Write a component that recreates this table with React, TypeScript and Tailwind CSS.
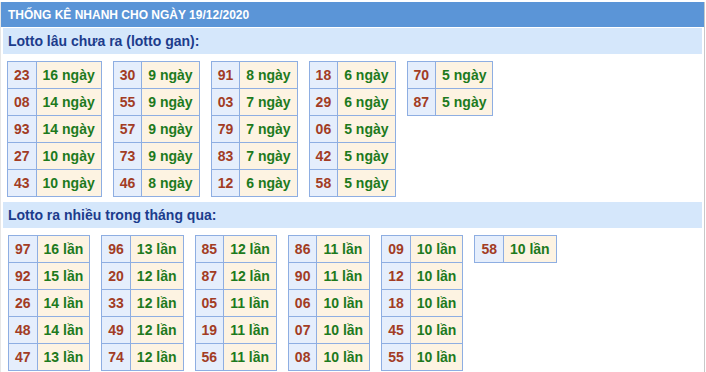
import React from "react";

type Row = [string, string];

const ganTables: Row[][] = [
  [["23", "16 ngày"], ["08", "14 ngày"], ["93", "14 ngày"], ["27", "10 ngày"], ["43", "10 ngày"]],
  [["30", "9 ngày"], ["55", "9 ngày"], ["57", "9 ngày"], ["73", "9 ngày"], ["46", "8 ngày"]],
  [["91", "8 ngày"], ["03", "7 ngày"], ["79", "7 ngày"], ["83", "7 ngày"], ["12", "6 ngày"]],
  [["18", "6 ngày"], ["29", "6 ngày"], ["06", "5 ngày"], ["42", "5 ngày"], ["58", "5 ngày"]],
  [["70", "5 ngày"], ["87", "5 ngày"]],
];

const nhieuTables: Row[][] = [
  [["97", "16 lần"], ["92", "15 lần"], ["26", "14 lần"], ["48", "14 lần"], ["47", "13 lần"]],
  [["96", "13 lần"], ["20", "12 lần"], ["33", "12 lần"], ["49", "12 lần"], ["74", "12 lần"]],
  [["85", "12 lần"], ["87", "12 lần"], ["05", "11 lần"], ["19", "11 lần"], ["56", "11 lần"]],
  [["86", "11 lần"], ["90", "11 lần"], ["06", "10 lần"], ["07", "10 lần"], ["08", "10 lần"]],
  [["09", "10 lần"], ["12", "10 lần"], ["18", "10 lần"], ["45", "10 lần"], ["55", "10 lần"]],
  [["58", "10 lần"]],
];

const LottoTable = ({ rows }: { rows: Row[] }) => (
  <table className="border-collapse self-start text-[14px] font-bold">
    <tbody>
      {rows.map(([num, val]) => (
        <tr key={num} className="h-[27px]">
          <td className="border border-[#8eaee2] bg-[#e5eefc] px-[6px] py-0 text-[#a23c24]">{num}</td>
          <td className="border border-[#8eaee2] bg-[#fdf3e2] px-[6px] py-0 text-[#1d7a1d] whitespace-nowrap">{val}</td>
        </tr>
      ))}
    </tbody>
  </table>
);

const SubHeader = ({ title }: { title: string }) => (
  <div className="flex h-[26px] items-center bg-[#d5e7fb] pl-[5px] text-[14px] font-bold text-[#1c3c8c]">
    {title}
  </div>
);

export default function App() {
  return (
    <div
      className="w-[705px] bg-white pt-[2px]"
      style={{ fontFamily: '"Liberation Sans", Arial, sans-serif' }}
    >
      <div className="border-r border-[#c8c8c8] border-l border-l-[#e6e6e6] h-[370px]">
        <div className="flex h-[25px] items-center bg-[#5b95d7] pl-[7px] text-[12px] font-bold text-white">
          THỐNG KÊ NHANH CHO NGÀY 19/12/2020
        </div>
        <div className="px-[2px] pt-[1px]">
          <SubHeader title="Lotto lâu chưa ra (lotto gan):" />
          <div className="flex gap-[11px] pl-[4px] pt-[7px]">
            {ganTables.map((t, i) => (
              <LottoTable key={i} rows={t} />
            ))}
          </div>
          <div className="pt-[5px]">
            <SubHeader title="Lotto ra nhiều trong tháng qua:" />
          </div>
          <div className="flex gap-[11px] pl-[5px] pt-[7px]">
            {nhieuTables.map((t, i) => (
              <LottoTable key={i} rows={t} />
            ))}
          </div>
        </div>
      </div>
    </div>
  );
}
